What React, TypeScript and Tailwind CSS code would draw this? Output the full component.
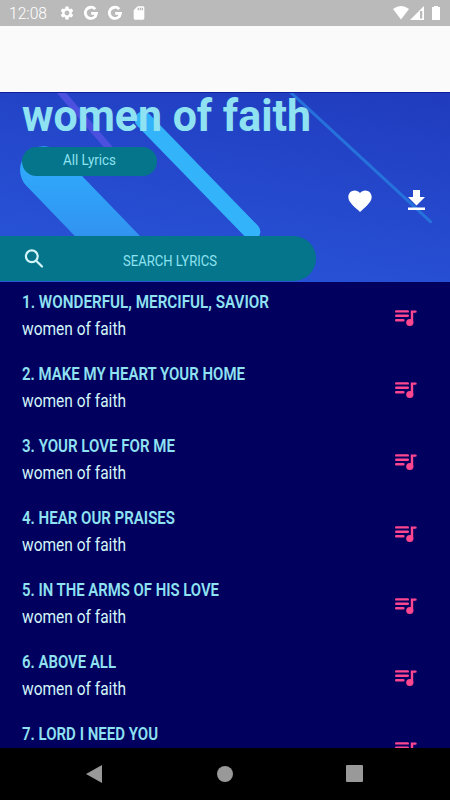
import { MdFavorite, MdSdCard, MdSettings } from "react-icons/md";

const songs = [
  { title: "1. WONDERFUL, MERCIFUL, SAVIOR", width: 247, artist: "women of faith" },
  { title: "2. MAKE MY HEART YOUR HOME", width: 223, artist: "women of faith" },
  { title: "3. YOUR LOVE FOR ME", width: 153, artist: "women of faith" },
  { title: "4. HEAR OUR PRAISES", width: 153, artist: "women of faith" },
  { title: "5. IN THE ARMS OF HIS LOVE", width: 197, artist: "women of faith" },
  { title: "6. ABOVE ALL", width: 94, artist: "women of faith" },
  { title: "7. LORD I NEED YOU", width: 136 },
];

type LineProps = {
  text: string;
  width: number;
  className: string;
};

// Single line of text fitted to a given width
const Line = ({ text, width, className }: LineProps) => (
  <svg className={`block h-6 overflow-visible ${className}`} width={width} fill="currentColor">
    <text x="0" y="18" textLength={width} lengthAdjust="spacingAndGlyphs">
      {text}
    </text>
  </svg>
);

const GoogleIcon = () => (
  <svg viewBox="0 0 16 16" className="size-4" fill="none" stroke="white" strokeWidth="2.8">
    <path d="M12.2 4.2A5.6 5.6 0 1 0 13.5 8.4H8.2" />
  </svg>
);

const SearchIcon = () => (
  <svg viewBox="0 0 24 24" className="ml-[22px] size-6" fill="none" stroke="#d3f6fa" strokeWidth="2.2" strokeLinecap="round">
    <circle cx="9.8" cy="9.3" r="5.9" />
    <path d="M14.2 13.7L20 19.5" />
  </svg>
);

const QueueIcon = () => (
  <svg viewBox="0 0 24 18" className="h-[18px] w-6 shrink-0" fill="none" stroke="#fc4790" strokeWidth="2.4" strokeLinecap="round">
    <path d="M2.2 2.4h11.6M2.2 6.7h11.6M2.2 11.2h7.2M18 13.5V2.6h3.5" />
    <circle cx="15.8" cy="13.5" r="3.6" fill="#fc4790" stroke="none" />
  </svg>
);

const StatusBar = () => (
  <header className="flex h-[26px] shrink-0 items-center bg-[#bababa] px-[9px] text-white">
    <Line text="12:08" width={38} className="text-[16.5px] font-light" />
    <div className="ml-3 flex items-center gap-2">
      <MdSettings className="size-4" />
      <GoogleIcon />
      <GoogleIcon />
      <MdSdCard className="size-4" />
    </div>
    <svg viewBox="0 0 50 16" className="ml-auto h-4 w-[50px]" fill="white">
      <path d="M2 4Q10 -2 18 4L10 14.5Z" />
      <path d="M33 1v14H19Z" />
      <path d="M29 6h2.3v7.5H29Z" fill="#bababa" />
      <path d="M41 2h2V1h4v1h2v13h-8Z" />
    </svg>
  </header>
);

const Hero = () => (
  <section className="relative h-[189.5px] shrink-0 border-t border-[#0d1f9c] bg-linear-[10deg] from-[#2957da] via-[#2549cd] to-[#203bbd]">
    <svg viewBox="0 0 450 189" className="absolute inset-x-0 top-0 h-[188.5px] w-[450px] overflow-hidden" fill="none" strokeLinecap="round">
      <defs>
        <linearGradient id="beam" x1="0" y1="0" x2="0" y2="1">
          <stop offset="0" stopColor="#2fa8fb" />
          <stop offset="1" stopColor="#328ded" />
        </linearGradient>
      </defs>
      <path d="M56 -6L112 59" stroke="#4b50df" strokeWidth="7" />
      <path d="M143 27L252 139" stroke="#33b3fa" strokeWidth="17" />
      <path d="M43 77L126 163" stroke="url(#beam)" strokeWidth="47" />
      <path d="M285 -6L431 129" stroke="#2672dc" strokeWidth="3" />
    </svg>
    <div className="relative flex h-[188.5px] flex-col">
      <svg className="ml-[22px] h-[54px] w-[289px] shrink-0 overflow-visible text-[45px] font-bold" fill="#8fe2f1">
        <text x="0" y="37.5" textLength="289" lengthAdjust="spacingAndGlyphs">
          women of faith
        </text>
      </svg>
      <button className="ml-[22px] flex h-[29px] w-[135px] shrink-0 justify-center rounded-full bg-[#04758a] text-[#8fe2f1]">
        <Line text="All Lyrics" width={53} className="text-[14.5px]" />
      </button>
      <div className="flex h-[60px] shrink-0 items-start justify-end gap-[34px] pt-[11px] pr-[25px] text-white">
        <MdFavorite className="size-7" />
        <svg viewBox="0 0 17 20" className="mt-[3px] h-5 w-[17px]" fill="currentColor">
          <path d="M5 0h7v7h5l-8.5 8.5L0 7h5ZM0 17.5h17V20H0Z" />
        </svg>
      </div>
      <div className="flex h-[45px] w-[316px] shrink-0 items-center rounded-r-full bg-[#04758a] text-[#8fe2f1]">
        <SearchIcon />
        <Line text="SEARCH LYRICS" width={94} className="mt-0.5 ml-[77px] text-[15.5px]" />
      </div>
    </div>
  </section>
);

const NavBar = () => (
  <nav className="flex h-[52.5px] shrink-0 items-center justify-between bg-black pr-[87px] pl-[86px]">
    <svg viewBox="0 0 16 18" className="h-[18px] w-4" fill="#999">
      <path d="M0 9L16 0v18Z" />
    </svg>
    <div className="ml-px size-4 rounded-full bg-[#999]" />
    <div className="size-[17px] rounded-[1px] bg-[#999]" />
  </nav>
);

const App = () => {
  return (
    <div className="flex h-[800px] w-[450px] flex-col overflow-hidden bg-[#02005e] font-['Roboto',sans-serif]">
      <StatusBar />
      <div className="h-[66px] shrink-0 bg-[#fafafa]" />
      <Hero />
      <main className="min-h-0 flex-1 overflow-hidden">
        {songs.map((song) => (
          <article key={song.title} className="flex h-[71.95px] items-start justify-between pt-[8.8px] pr-8 pl-[22px]">
            <div>
              <Line text={song.title} width={song.width} className="text-[17.5px] font-semibold text-[#8fe2f1]" />
              {song.artist && (
                <Line text={song.artist} width={104} className="mt-[3px] text-[17.5px] text-[#d3f6fa]" />
              )}
            </div>
            <div className="pt-[19px]">
              <QueueIcon />
            </div>
          </article>
        ))}
      </main>
      <NavBar />
    </div>
  );
};

export default App;
